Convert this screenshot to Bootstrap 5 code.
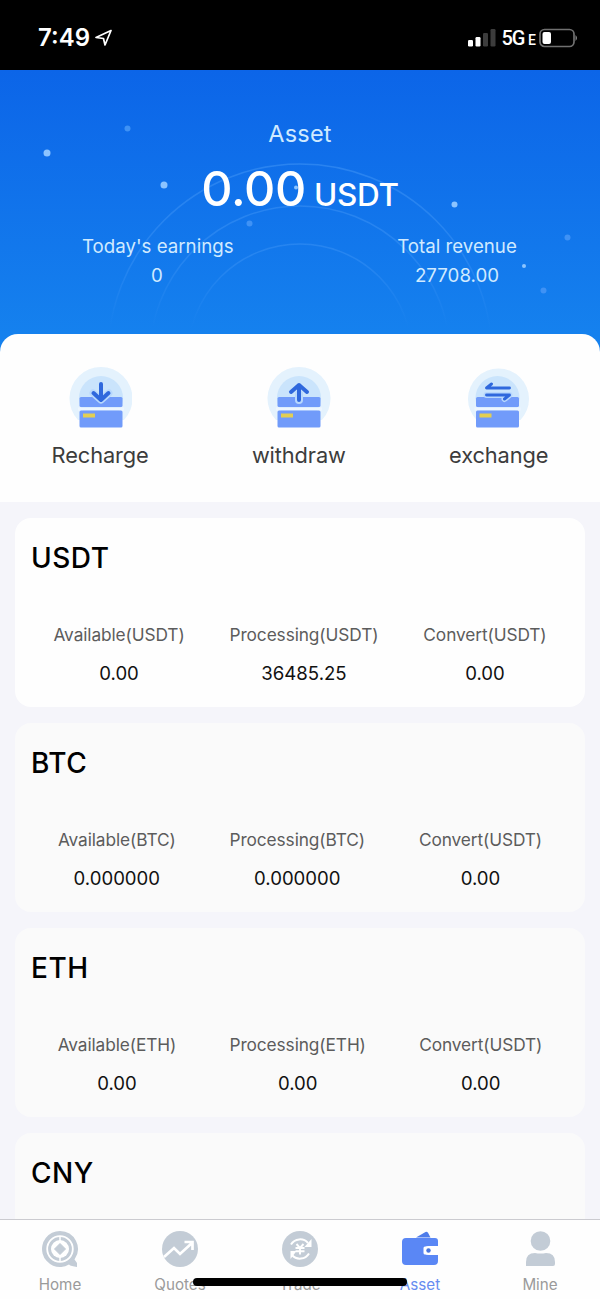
<!DOCTYPE html>
<html lang="en">
<head>
<meta charset="utf-8">
<meta name="viewport" content="width=device-width, initial-scale=1">
<title>Asset</title>
<link href="https://cdn.jsdelivr.net/npm/bootstrap@5.3.0/dist/css/bootstrap.min.css" rel="stylesheet">
<style>
  body { font-family: Inter, "Liberation Sans", sans-serif; height: 1299px; background: #f5f5fa; color: #111; }
  .statusbar { height: 70px; padding: 5px 22px 0 38px; }
  .clock { font-size: 24px; font-weight: 600; letter-spacing: 0; line-height: 30px; }
  .signal { margin-right: 5px; }
  .carrier { font: 500 20px/26px Roboto, sans-serif; letter-spacing: -1.2px; }
  .carrier-type { font: 500 14px/20px Roboto, sans-serif; margin: 0 3px 0 4px; }
  .hero { height: 264px; background: linear-gradient(#0c65e8, #1581ee); color: #d0eaff; }
  .hero-art { left: 0; top: 0; }
  .hero-title { font-size: 23.5px; line-height: 30px; padding-top: 49px; letter-spacing: .2px; }
  .amount { line-height: 54px; margin-top: 13px; font-size: 48.5px; letter-spacing: -.3px; }
  .amount-unit { font-size: 31.5px; margin-left: 8px; }
  .hero-stats { font-size: 18.7px; line-height: 29px; margin-top: 10px; padding-left: 14px; gap: 150px; }
  .hero-stats > div { width: 150px; }
  .panel-wrap { background: #1581ee; }
  .panel { height: 168px; border-radius: 18px 18px 0 0; padding-top: 32px; background: #fefefe; }
  .action { font-size: 21.8px; line-height: 30px; color: #3c3c3c; letter-spacing: -.1px; }
  .coin { width: 570px; height: 189px; border-radius: 16px; padding: 22px 16px 0; background: #fafafa; }
  .coin.primary { background: #fefefe; }
  .coin h2 { font-size: 28px; line-height: 36px; margin: 0 0 41px; letter-spacing: .5px; font-weight: 500; color: #000; }
  .coin-label { font-size: 17.3px; line-height: 36px; color: #5c5c5c; letter-spacing: -.1px; }
  .coin-value { font-size: 18.6px; line-height: 40px; }
  .tabs { height: 80px; border-top: 1px solid #cbcbd0; background: #fefefe; }
  .tab-item { font-size: 15.2px; line-height: 20px; color: #9a9a9a; padding-top: 10px; }
  .tab-item.current { color: #668cf0; }
  .tab-item svg { margin-bottom: 7px; }
  .home-bar { left: 193px; bottom: 13px; width: 214px; height: 8px; border-radius: 4px; background: #000; }
</style>
</head>
<body class="d-flex flex-column overflow-hidden position-relative">
<header class="statusbar bg-black text-white d-flex align-items-center justify-content-between flex-shrink-0">
  <div class="d-flex align-items-center">
    <span class="clock">7:49</span>
    <svg width="18" height="18" viewBox="0 0 18 18" class="ms-1" fill="none" stroke="#fff" stroke-width="1.7" stroke-linejoin="round"><path d="M17 1.500 2 8.500l7.500 1L11 16z"/></svg>
  </div>
  <div class="d-flex align-items-center">
    <svg class="signal" width="28" height="18" viewBox="0 0 28 18"><rect y="11" width="5" height="6.500" rx="1.200" fill="#fff"/><rect x="7.500" y="8" width="5" height="9.500" rx="1.200" fill="#fff"/><rect x="15" y="4" width="5" height="13.500" rx="1.200" fill="#3c3c3c"/><rect x="22.500" y="0" width="5" height="17.500" rx="1.200" fill="#3c3c3c"/></svg>
    <span class="carrier">5G</span><span class="carrier-type pt-1">E</span>
    <svg width="39" height="20" viewBox="0 0 39 20"><rect x="1" y="1.500" width="34" height="17" rx="4.500" fill="none" stroke="#707070" stroke-width="1.700"/><rect x="3.500" y="4" width="8.500" height="12" rx="2" fill="#fff"/><path d="M36.500 7q3 3 0 6z" fill="#888"/></svg>
  </div>
</header>

<section class="hero position-relative text-center flex-shrink-0">
  <svg class="hero-art position-absolute" width="600" height="264" viewBox="0 0 600 264">
    <defs><linearGradient id="fade" x1="0" y1="90" x2="0" y2="258" gradientUnits="userSpaceOnUse"><stop offset="0" stop-color="#4a9cf8" stop-opacity=".45"/><stop offset=".6" stop-color="#4a9cf8" stop-opacity=".35"/><stop offset="1" stop-color="#4a9cf8" stop-opacity="0"/></linearGradient></defs>
    <g fill="none" stroke="url(#fade)" stroke-width="1.500"><circle cx="300" cy="286" r="192"/><circle cx="300" cy="286" r="150"/><circle cx="300" cy="286" r="112"/></g>
    <g fill="#8cc4ff"><circle cx="47" cy="83" r="3.500"/><circle cx="164" cy="115" r="3.500"/><circle cx="454.500" cy="134.500" r="3"/><circle cx="524" cy="196" r="2"/><circle cx="296" cy="117.500" r="2"/></g>
    <g fill="#3f92f5"><circle cx="127.500" cy="58.500" r="3"/><circle cx="249.500" cy="153.500" r="3"/><circle cx="567.500" cy="167.500" r="3"/><circle cx="543.500" cy="220.500" r="3"/></g>
  </svg>
  <div class="position-relative">
    <div class="hero-title">Asset</div>
    <div class="amount text-white fw-medium"><span>0.00</span><span class="amount-unit">USDT</span></div>
    <div class="hero-stats d-flex justify-content-center">
      <div class="text-nowrap">Today's earnings<br>0</div>
      <div class="text-nowrap">Total revenue<br>27708.00</div>
    </div>
  </div>
</section>

<section class="panel-wrap flex-shrink-0">
  <div class="panel d-flex justify-content-around align-items-start">
    <div class="action d-flex flex-column align-items-center gap-2">
      <svg width="64" height="66" viewBox="-1 0 64 66"><path d="M9 54A31.500 31.500 0 1 1 55 54z" fill="#e4f2fd"/><circle cx="32" cy="32" r="22" fill="#cae4fc"/><rect x="10.500" y="31" width="43" height="10" rx="1.500" fill="#719bfa"/><path d="M9 41.500h46v3H9z" fill="#edf6ff"/><rect x="10.500" y="44.500" width="43" height="17" rx="1.500" fill="#719bfa"/><rect x="14" y="47.500" width="12" height="4" fill="#e3cf52"/><g fill="none" stroke-linejoin="round" stroke-linecap="round"><path d="M24 27l8 7 8-7" stroke="#b8d8fd" stroke-width="7"/><path d="M32 18v16M24.500 27l7.500 7 7.500-7" stroke="#2f68dd" stroke-width="4"/></g></svg>
      <span>Recharge</span>
    </div>
    <div class="action d-flex flex-column align-items-center gap-2">
      <svg width="64" height="66" viewBox="0 0 64 66"><path d="M9 54A31.500 31.500 0 1 1 55 54z" fill="#e4f2fd"/><circle cx="32" cy="32" r="22" fill="#cae4fc"/><rect x="10.500" y="31" width="43" height="10" rx="1.500" fill="#719bfa"/><path d="M9 41.500h46v3H9z" fill="#edf6ff"/><rect x="10.500" y="44.500" width="43" height="17" rx="1.500" fill="#719bfa"/><rect x="14" y="47.500" width="12" height="4" fill="#e3cf52"/><g fill="none" stroke-linejoin="round" stroke-linecap="round"><path d="M32 28v6" stroke="#b8d8fd" stroke-width="8"/><path d="M32 34V19M24 26l8-7 8 7" stroke="#2f68dd" stroke-width="4"/></g></svg>
      <span>withdraw</span>
    </div>
    <div class="action d-flex flex-column align-items-center gap-2">
      <svg width="64" height="66" viewBox="1.500 0 64 66"><path d="M11 54A30.500 30.500 0 1 1 55 54z" fill="#e4f2fd"/><circle cx="32" cy="32" r="22" fill="#cae4fc"/><rect x="10.500" y="31" width="43" height="10" rx="1.500" fill="#719bfa"/><path d="M9 41.500h46v3H9z" fill="#edf6ff"/><rect x="10.500" y="44.500" width="43" height="17" rx="1.500" fill="#719bfa"/><rect x="14" y="47.500" width="12" height="4" fill="#e3cf52"/><g fill="none" stroke-linejoin="round" stroke-linecap="round"><path d="M21 29h23l-5 4" stroke="#b8d8fd" stroke-width="6"/><path d="M44 22H21l5-4M21 29h23l-5 4" stroke="#2f68dd" stroke-width="2.900"/></g></svg>
      <span>exchange</span>
    </div>
  </div>
</section>

<main class="flex-grow-1 overflow-hidden d-flex flex-column gap-3 pt-3">
  <article class="coin primary mx-auto flex-shrink-0">
    <h2>USDT</h2>
    <div class="d-flex justify-content-around text-center">
      <div><div class="coin-label">Available(USDT)</div><div class="coin-value">0.00</div></div>
      <div><div class="coin-label">Processing(USDT)</div><div class="coin-value">36485.25</div></div>
      <div><div class="coin-label">Convert(USDT)</div><div class="coin-value">0.00</div></div>
    </div>
  </article>
  <article class="coin mx-auto flex-shrink-0">
    <h2>BTC</h2>
    <div class="d-flex justify-content-around text-center">
      <div><div class="coin-label">Available(BTC)</div><div class="coin-value">0.000000</div></div>
      <div><div class="coin-label">Processing(BTC)</div><div class="coin-value">0.000000</div></div>
      <div><div class="coin-label">Convert(USDT)</div><div class="coin-value">0.00</div></div>
    </div>
  </article>
  <article class="coin mx-auto flex-shrink-0">
    <h2>ETH</h2>
    <div class="d-flex justify-content-around text-center">
      <div><div class="coin-label">Available(ETH)</div><div class="coin-value">0.00</div></div>
      <div><div class="coin-label">Processing(ETH)</div><div class="coin-value">0.00</div></div>
      <div><div class="coin-label">Convert(USDT)</div><div class="coin-value">0.00</div></div>
    </div>
  </article>
  <article class="coin mx-auto flex-shrink-0"><h2>CNY</h2></article>
</main>

<nav class="tabs d-flex flex-shrink-0 text-center">
  <div class="tab-item flex-fill w-100 d-flex flex-column align-items-center">
    <svg width="38" height="38" viewBox="0 0 38 38"><path d="M19 1a18 18 0 1 0 9 33.600q2 2 8 2.400V33l-2.500-3.500A18 18 0 0 0 19 1z" fill="#c3ccd6"/><circle cx="19" cy="19" r="12.800" fill="none" stroke="#fff" stroke-width="1.800"/><circle cx="19" cy="19" r="9" fill="#fff"/><path d="M19 6v5M19 27v5" stroke="#fff" stroke-width="1.500"/><path d="m19 13.500 5.500 5.500-5.500 5.500-5.500-5.500z" fill="#c3ccd6" stroke="#c3ccd6" stroke-linejoin="round"/></svg>
    <span>Home</span>
  </div>
  <div class="tab-item flex-fill w-100 d-flex flex-column align-items-center">
    <svg width="38" height="38" viewBox="0 0 38 38"><circle cx="19" cy="19" r="18" fill="#c3ccd6"/><path d="M3 27 13 18l6 6L31 13M23.500 12H31.500v8" fill="none" stroke="#fff" stroke-width="2.700"/></svg>
    <span>Quotes</span>
  </div>
  <div class="tab-item flex-fill w-100 d-flex flex-column align-items-center">
    <svg width="38" height="38" viewBox="0 0 38 38"><circle cx="19" cy="19" r="18" fill="#c3ccd6"/><g fill="none" stroke="#fff" stroke-width="2"><path d="M10 14.500a10.500 10.500 0 0 1 17-1.500M28 23.500a10.500 10.500 0 0 1-17 1.500"/><path d="m15.500 14 3.500 4 3.500-4M14.500 18h9M14.500 21.300h9M19 18v6.500" stroke-width="1.900"/></g><path d="M30.500 9v8h-7zM9.500 29v-8h6z" fill="#fff"/></svg>
    <span>Trade</span>
  </div>
  <div class="tab-item current flex-fill w-100 d-flex flex-column align-items-center">
    <svg width="38" height="38" viewBox="0 0 38 38"><path d="m15 7.500 9.500-5.500q1.500-.6 2.500.8l2.500 4.700z" fill="#4e7cea"/><path d="M5 8h29q3 0 3 3v5h-9q-5 0-5 4.500t5 4.500h9v6q0 4-4 4H5q-4 0-4-4V12q0-4 4-4z" fill="#5a87f5"/><rect x="22.500" y="16.500" width="15.500" height="8" rx="1.500" fill="#fff"/><circle cx="27.500" cy="20.500" r="2.200" fill="#4774dd"/></svg>
    <span>Asset</span>
  </div>
  <div class="tab-item flex-fill w-100 d-flex flex-column align-items-center">
    <svg width="38" height="38" viewBox="0 0 38 38"><circle cx="19.500" cy="11" r="9.800" fill="#c3ccd6"/><path d="M5 36v-4q0-9 9-9 5.500 1.200 11 0 9 0 9 9v2q0 2-2 2z" fill="#c3ccd6"/></svg>
    <span>Mine</span>
  </div>
</nav>
<div class="home-bar position-absolute"></div>
<script src="https://cdn.jsdelivr.net/npm/bootstrap@5.3.0/dist/js/bootstrap.bundle.min.js"></script>
</body>
</html>
